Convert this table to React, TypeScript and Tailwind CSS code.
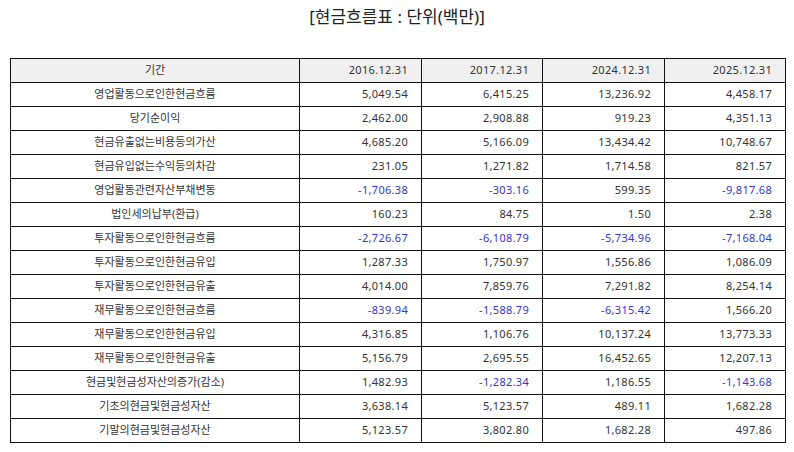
import React from "react";

type Row = { label: string; values: string[] };

const periods = ["2016.12.31", "2017.12.31", "2024.12.31", "2025.12.31"];

const rows: Row[] = [
	{ label: "영업활동으로인한현금흐름", values: ["5,049.54", "6,415.25", "13,236.92", "4,458.17"] },
	{ label: "당기순이익", values: ["2,462.00", "2,908.88", "919.23", "4,351.13"] },
	{ label: "현금유출없는비용등의가산", values: ["4,685.20", "5,166.09", "13,434.42", "10,748.67"] },
	{ label: "현금유입없는수익등의차감", values: ["231.05", "1,271.82", "1,714.58", "821.57"] },
	{ label: "영업활동관련자산부채변동", values: ["-1,706.38", "-303.16", "599.35", "-9,817.68"] },
	{ label: "법인세의납부(환급)", values: ["160.23", "84.75", "1.50", "2.38"] },
	{ label: "투자활동으로인한현금흐름", values: ["-2,726.67", "-6,108.79", "-5,734.96", "-7,168.04"] },
	{ label: "투자활동으로인한현금유입", values: ["1,287.33", "1,750.97", "1,556.86", "1,086.09"] },
	{ label: "투자활동으로인한현금유출", values: ["4,014.00", "7,859.76", "7,291.82", "8,254.14"] },
	{ label: "재무활동으로인한현금흐름", values: ["-839.94", "-1,588.79", "-6,315.42", "1,566.20"] },
	{ label: "재무활동으로인한현금유입", values: ["4,316.85", "1,106.76", "10,137.24", "13,773.33"] },
	{ label: "재무활동으로인한현금유출", values: ["5,156.79", "2,695.55", "16,452.65", "12,207.13"] },
	{ label: "현금및현금성자산의증가(감소)", values: ["1,482.93", "-1,282.34", "1,186.55", "-1,143.68"] },
	{ label: "기초의현금및현금성자산", values: ["3,638.14", "5,123.57", "489.11", "1,682.28"] },
	{ label: "기말의현금및현금성자산", values: ["5,123.57", "3,802.80", "1,682.28", "497.86"] },
];

const font = { fontFamily: '"Noto Sans", "Noto Sans CJK KR", sans-serif' };

export default function App() {
	return (
		<div className="w-[794px] h-[452px] bg-white text-[#333]" style={font}>
			{/* Title */}
			<div className="h-[58px] pt-[5px] text-center text-[17px] leading-[24px] text-[#222]">
				[현금흐름표 : 단위(백만)]
			</div>

			{/* Table */}
			<table className="ml-[10px] w-[775px] border-collapse table-fixed text-[11px]">
				<colgroup>
					<col className="w-[289px]" />
					<col className="w-[122px]" />
					<col className="w-[121px]" />
					<col className="w-[122px]" />
					<col className="w-[121px]" />
				</colgroup>
				<thead>
					<tr className="h-[24px] bg-[#f0f0f0]">
						<th className="border border-[#111] font-normal text-center">기간</th>
						{periods.map((p) => (
							<th key={p} className="border border-[#111] font-normal text-right pr-[13px] tracking-[0.3px]">
								{p}
							</th>
						))}
					</tr>
				</thead>
				<tbody>
					{rows.map((row) => (
						<tr key={row.label} className="h-[24px]">
							<td className="border border-[#111] text-center">{row.label}</td>
							{row.values.map((v, i) => (
								<td
									key={i}
									className={`border border-[#111] text-right pr-[13px] tracking-[0.3px] ${
										v.startsWith("-") ? "text-[#3535d0]" : ""
									}`}>
									{v}
								</td>
							))}
						</tr>
					))}
				</tbody>
			</table>
		</div>
	);
}
